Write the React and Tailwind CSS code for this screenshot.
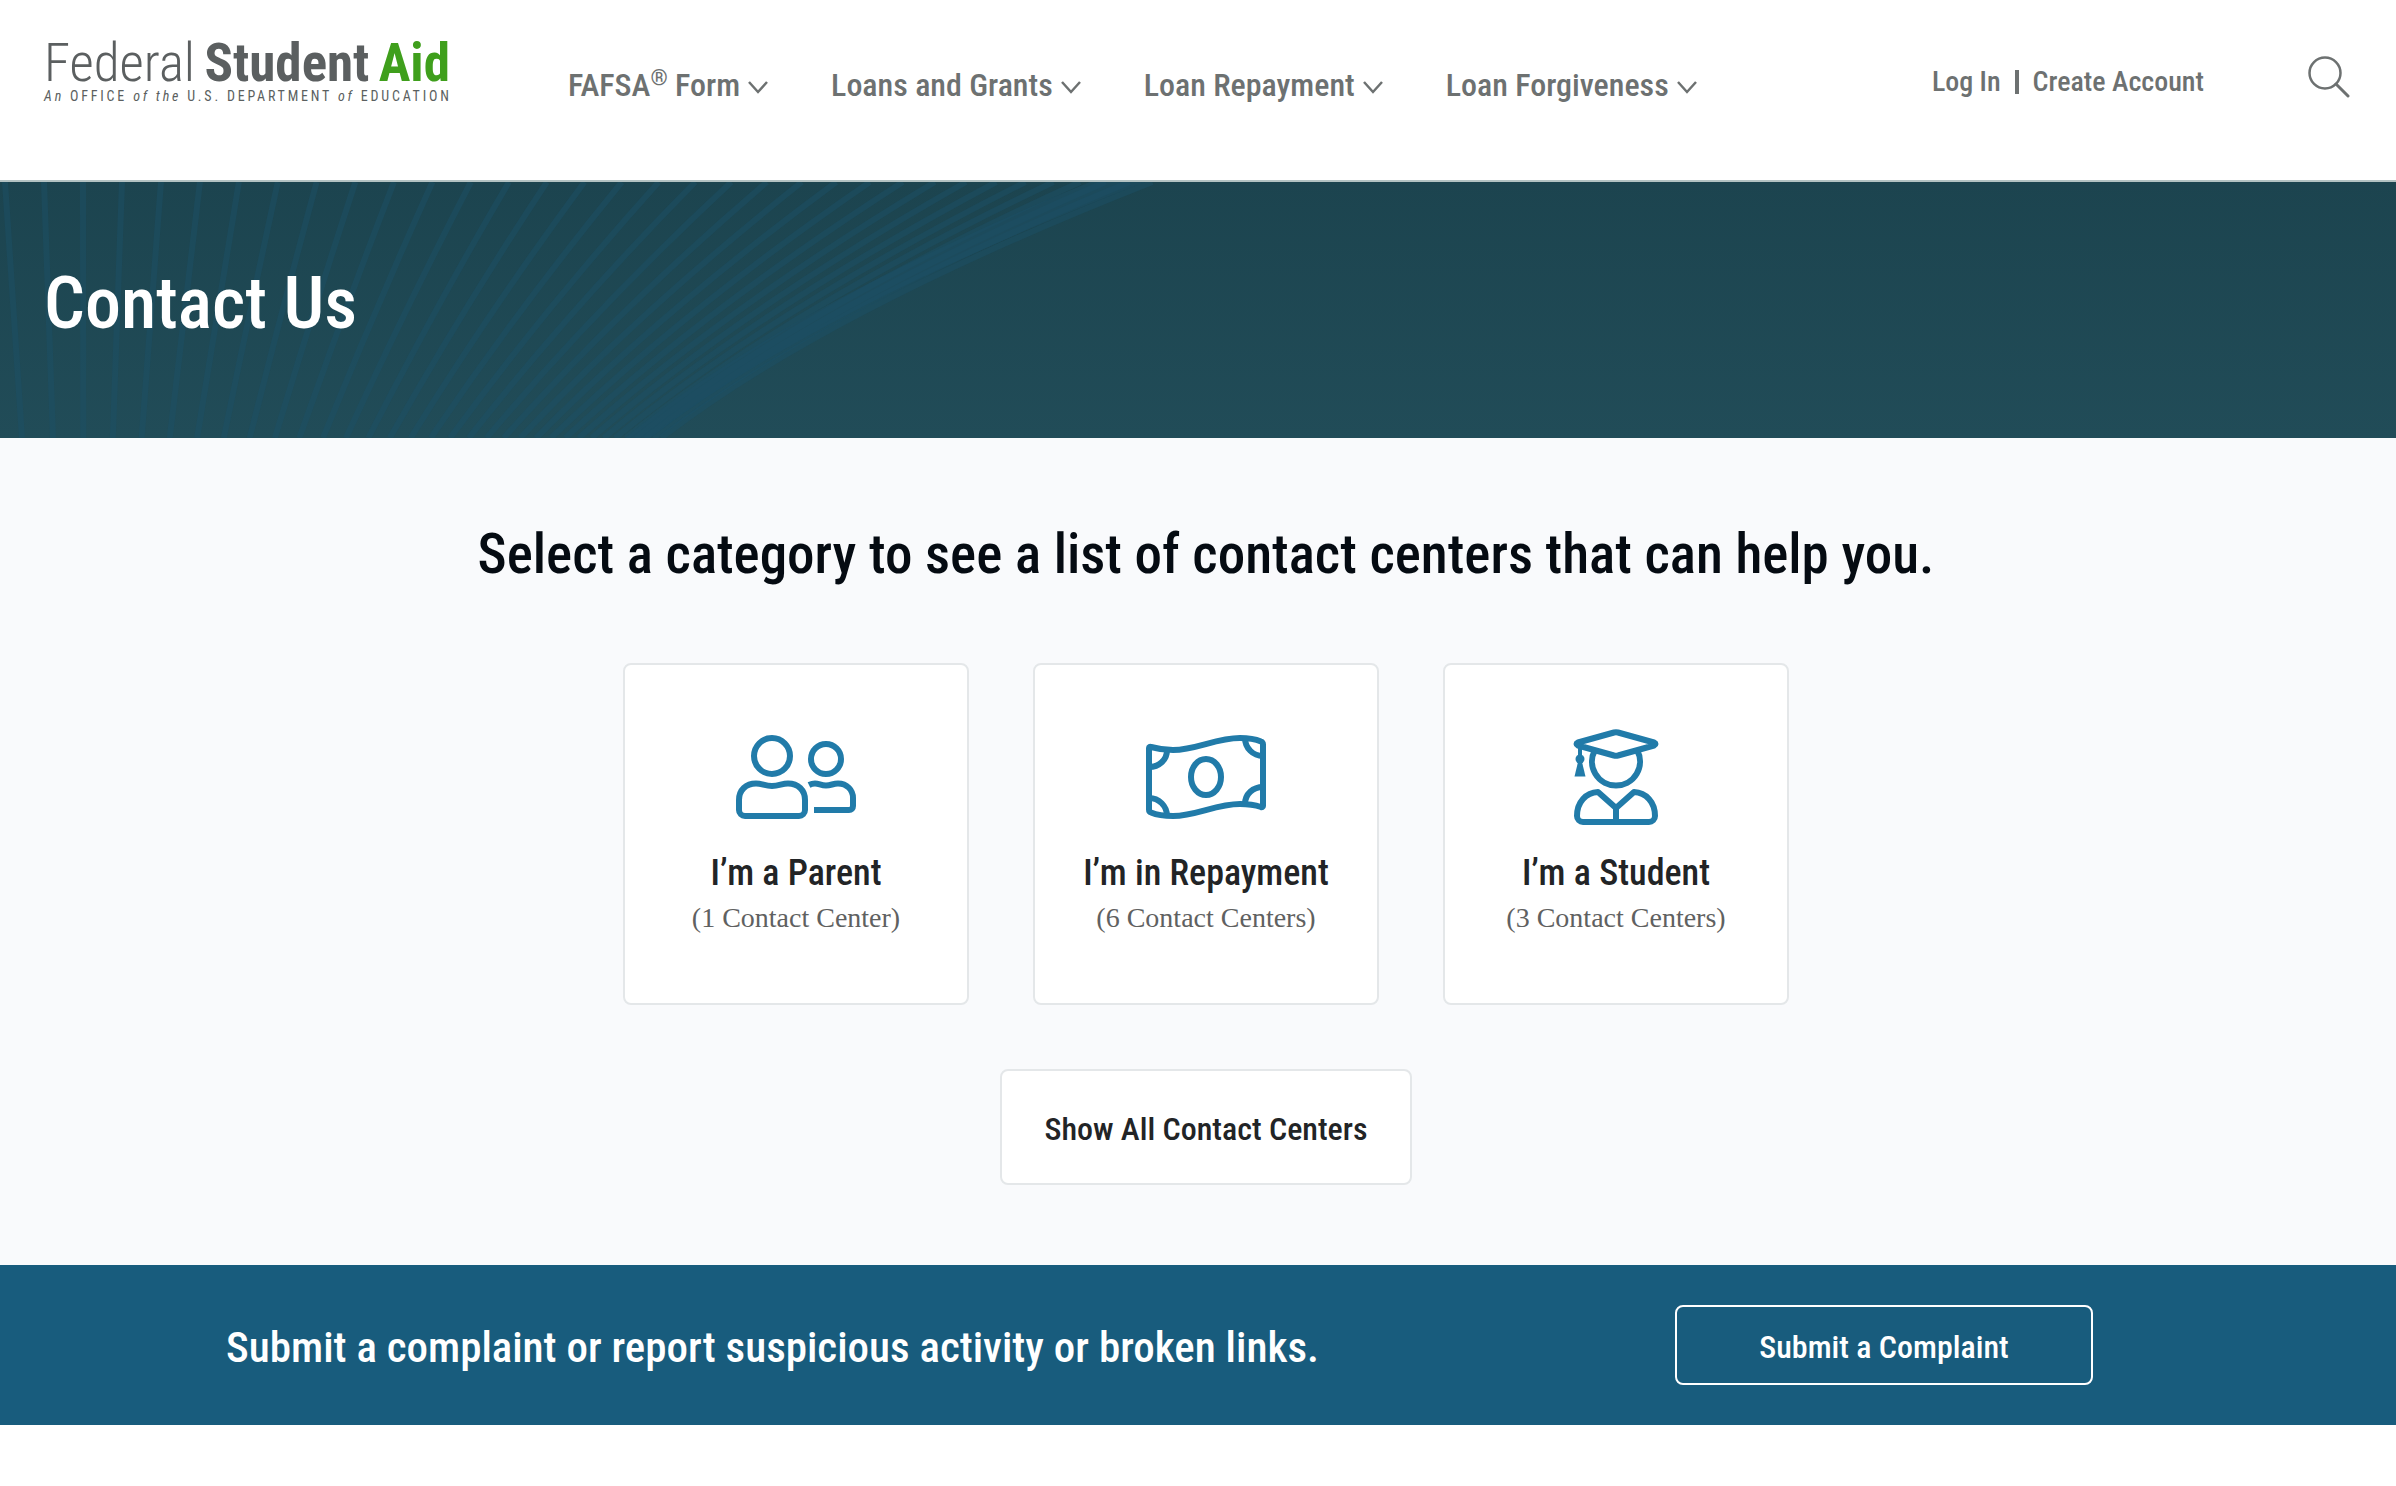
const navItems = [
  { label: 'FAFSA', mark: '®', rest: ' Form' },
  { label: 'Loans and Grants' },
  { label: 'Loan Repayment' },
  { label: 'Loan Forgiveness' },
];

const ParentIcon = () => (
  <svg width="120" height="96" viewBox="0 0 120 96" fill="none" stroke="#217ba9" strokeWidth="6" aria-hidden="true">
    <circle cx="36" cy="27" r="18" />
    <circle cx="90" cy="30" r="15" />
    <path d="M3 81V71C3 61 10 54.500 20 54.500c6 0 9 2.500 16 2.500s10-2.500 16-2.500c10 0 17 6.500 17 16.500v10a6 6 0 0 1-6 6H9a6 6 0 0 1-6-6z" />
    <path d="M73 56c2-1 4-1.500 6-1.500 4 0 6 2 11 2s7-2 12-2c9 0 15 6.500 15 14.500v8c0 2.500-1.500 4-4 4H78" />
  </svg>
);

const RepaymentIcon = () => (
  <svg width="120" height="96" viewBox="0 0 120 96" fill="none" stroke="#217ba9" strokeWidth="6" strokeLinejoin="round" aria-hidden="true">
    <path d="M3 19C3 18 4 17.500 5 18c7 2 15 3 22 3C50 21 70 9 94 9c8 0 15 1 21 3.500 1.500.5 2 1.500 2 3V77c0 1-1 1.500-2 1-6-2-14-3-21-3-24 0-44 12-67 12-8 0-16-1-22-3.500-1.500-.5-2-1.500-2-3z" />
    <path d="M21 21c0 10-8 17-18 17M99 9c0 10 8 18 18 18M99 75c0-10 8-17 18-17M21 87c0-10-8-18-18-18" />
    <ellipse cx="60" cy="48" rx="15" ry="18" />
  </svg>
);

const StudentIcon = () => (
  <svg width="120" height="96" viewBox="0 0 120 96" fill="none" stroke="#217ba9" strokeWidth="6" strokeLinejoin="round" aria-hidden="true">
    <path d="M58 3.500Q60 3 62 3.500L98 13.500Q101 15 98 16.500L62 26.500Q60 27 58 26.500L22 16.500Q19 15 22 13.500Z" />
    <path d="M39 21A24 24 0 1 0 81 21" />
    <path d="M24 17V29" strokeWidth="4" />
    <circle cx="24" cy="30" r="4.500" fill="#217ba9" stroke="none" />
    <path d="M22 33H26L29.500 47.500H18.500Z" fill="#217ba9" stroke="none" />
    <path d="M21 87C21 73 30 63.500 42 63L60 79 78 63C90 63.500 99 73 99 87a6 6 0 0 1-6 6H27a6 6 0 0 1-6-6zM60 79V93" />
  </svg>
);

const categories = [
  { title: 'I’m a Parent', count: '(1 Contact Center)', Icon: ParentIcon },
  { title: 'I’m in Repayment', count: '(6 Contact Centers)', Icon: RepaymentIcon },
  { title: 'I’m a Student', count: '(3 Contact Centers)', Icon: StudentIcon },
];

// Fan of rays: spacing tightens and the curve grows towards the right edge
const RAY_COUNT = 34;
const rays = [];
let top = 5;
let bottom = 22;
for (let i = 0; i < RAY_COUNT; i++) {
  const t = i / (RAY_COUNT - 1);
  const bend = 80 * t * t * t;
  rays.push(`M${top} 0Q${(top + bottom) / 2 - bend} 128 ${bottom} 256`);
  top += 39 - 18 * t * t * t;
  bottom += 31 - 24 * t;
}

const HeroRays = () => (
  <svg className="absolute left-0 top-0" width="1200" height="256" viewBox="0 0 1200 256" fill="none" aria-hidden="true">
    {rays.map((d) => (
      <path key={d} d={d} stroke="#1b4f66" strokeOpacity="0.5" strokeWidth="6" />
    ))}
    <path d="M1090 0H1145Q815 128 650 256H625Q780 128 1090 0Z" fill="#1c4f64" fillOpacity="0.6" />
  </svg>
);

const Header = () => (
  <header className="flex items-start border-b-2 border-[#b3c2c2] bg-white px-11 pb-[71px] text-[#6d7171]">
    <a href="#home" className="mt-9 block w-[406px] shrink-0 text-[#5b5f60]">
      <span className="flex justify-between whitespace-nowrap text-[53px] leading-[54px]">
        <span className="font-light">Federal</span>
        <span className="font-bold">Student</span>
        <span className="font-bold text-[#3f9f1c]">Aid</span>
      </span>
      <span className="block whitespace-nowrap text-[14px] leading-3 tracking-[0.2em]">
        <i>An</i> OFFICE <i>of the</i> U.S. DEPARTMENT <i>of</i> EDUCATION
      </span>
    </a>
    <nav className="ml-[118px] mt-[61px] flex items-baseline gap-[63px]">
      {navItems.map((item) => (
        <button key={item.label} type="button" className="flex items-center gap-2 whitespace-nowrap text-[32px] font-medium leading-[48px]">
          <span>
            {item.label}
            {item.mark && <sup className="text-[22px]">{item.mark}</sup>}
            {item.rest}
          </span>
          <svg className="mt-1" width="20" height="14" viewBox="0 0 20 14" fill="none" stroke="currentColor" strokeWidth="2.500" aria-hidden="true">
            <path d="M1 2L10 12L19 2" />
          </svg>
        </button>
      ))}
    </nav>
    <div className="ml-auto mt-16 flex items-center gap-[14px] whitespace-nowrap text-[28px] font-medium leading-9">
      <a href="#login">Log In</a>
      <span className="h-6 w-1 bg-[#6d7171]" />
      <a href="#create">Create Account</a>
    </div>
    <button type="button" aria-label="Search" className="ml-[104px] mr-[2px] mt-14">
      <svg width="42" height="42" viewBox="0 0 42 42" fill="none" stroke="#6d7171" strokeWidth="2.500" strokeLinecap="round" aria-hidden="true">
        <circle cx="17" cy="17" r="15.500" />
        <path d="M28 28L40 40" strokeWidth="3" />
      </svg>
    </button>
  </header>
);

export default function App() {
  return (
    <div className="min-h-screen bg-white font-['Roboto_Condensed','Liberation_Sans',sans-serif]">
      <Header />

      <section className="relative overflow-hidden bg-linear-to-b from-[#1c444f] to-[#214c58] px-11 pb-[86px] pt-[74px]">
        <HeroRays />
        <h1 className="relative text-[72px] font-medium leading-[96px] text-white">Contact Us</h1>
      </section>

      <main className="flex flex-col items-center bg-[#f9fafc] pb-20 pl-4 pt-20">
        <h2 className="text-[55px] font-medium leading-[72px] text-[#050b12]">
          Select a category to see a list of contact centers that can help you.
        </h2>
        <div className="mt-[73px] flex gap-16">
          {categories.map(({ title, count, Icon }) => (
            <button
              key={title}
              type="button"
              className="flex w-[346px] flex-col items-center rounded-lg border-2 border-[#e4e7e9] bg-white pb-16 pt-16"
            >
              <Icon />
              <span className="mt-6 text-[36px] font-medium leading-12 text-[#222426]">{title}</span>
              <span className="font-['Liberation_Serif',serif] text-[28px] leading-[42px] text-[#5f6161]">{count}</span>
            </button>
          ))}
        </div>
        <button
          type="button"
          className="mt-16 rounded-lg border-2 border-[#e4e7e9] bg-white px-[42px] pb-[30px] pt-[34px] text-[32px] font-medium leading-12 text-[#222426]"
        >
          Show All Contact Centers
        </button>
      </main>

      <section className="flex items-center justify-between bg-[#185c7d] py-10 pl-[226px] pr-[303px] text-white">
        <p className="pt-1 text-[43px] font-medium leading-16">
          Submit a complaint or report suspicious activity or broken links.
        </p>
        <button type="button" className="w-[418px] rounded-lg border-2 border-white pb-[14px] pt-[18px] text-[32px] font-medium leading-11">
          Submit a Complaint
        </button>
      </section>
    </div>
  );
}
